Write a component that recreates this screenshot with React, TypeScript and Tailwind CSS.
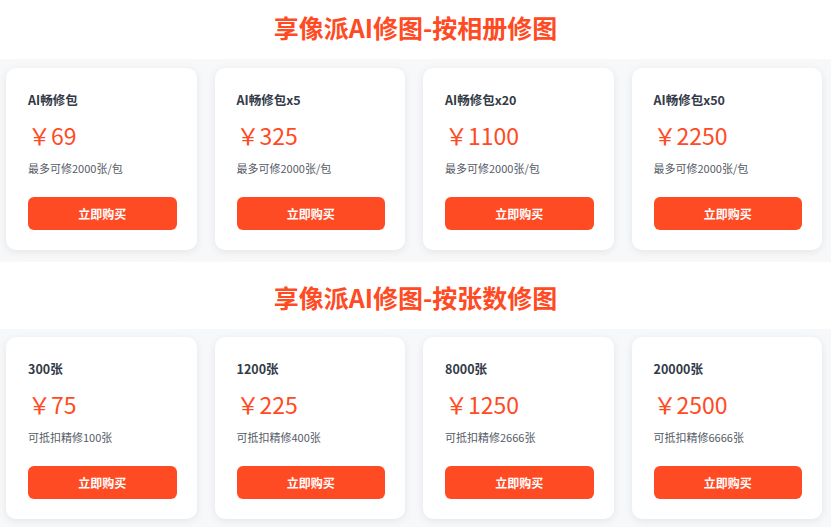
import React from "react";

type Item = { name: string; price: string; desc: string };

const rowA: Item[] = [
  { name: "AI畅修包", price: "69", desc: "最多可修2000张/包" },
  { name: "AI畅修包x5", price: "325", desc: "最多可修2000张/包" },
  { name: "AI畅修包x20", price: "1100", desc: "最多可修2000张/包" },
  { name: "AI畅修包x50", price: "2250", desc: "最多可修2000张/包" },
];

const rowB: Item[] = [
  { name: "300张", price: "75", desc: "可抵扣精修100张" },
  { name: "1200张", price: "225", desc: "可抵扣精修400张" },
  { name: "8000张", price: "1250", desc: "可抵扣精修2666张" },
  { name: "20000张", price: "2500", desc: "可抵扣精修6666张" },
];

function Card({ item }: { item: Item }) {
  return (
    <div className="flex h-[182px] flex-col rounded-[10px] bg-white pl-[22px] pr-[20px] pt-[23px] shadow-[0_2px_8px_rgba(0,0,0,0.08)]">
      <div className="h-[18px] text-[12.5px] leading-[18px] font-semibold text-[#333a48]">{item.name}</div>
      <div className="mt-[10px] h-[32px] text-[23px] leading-[32px] text-[#ff4b24]">
        ￥{item.price}
      </div>
      <div className="mt-[9px] h-[16px] text-[11px] leading-[16px] text-[#555b66]">{item.desc}</div>
      <button className="mt-[21px] h-[33px] w-full rounded-[6px] bg-[#ff4b24] text-[12px] font-bold text-white">
        立即购买
      </button>
    </div>
  );
}

function Row({ items, pt, pb }: { items: Item[]; pt: string; pb: string }) {
  return (
    <div className={`grid grid-cols-4 gap-[18px] bg-[#f7f8fa] pl-[6px] pr-[9px] ${pt} ${pb}`}>
      {items.map((it) => (
        <Card key={it.name} item={it} />
      ))}
    </div>
  );
}

export default function App() {
  return (
    <div
      className="h-[527px] w-[831px] overflow-hidden bg-white"
      style={{ fontFamily: '"Noto Sans CJK SC", "Noto Sans", sans-serif' }}
    >
      <div className="flex h-[59px] items-center justify-center pb-[5px]">
        <h1 className="text-[25px] font-bold leading-[32px] text-[#ff4b24]">享像派AI修图-按相册修图</h1>
      </div>
      <Row items={rowA} pt="pt-[9px]" pb="pb-[12px]" />
      <div className="flex h-[67px] items-center justify-center pt-[3px]">
        <h1 className="text-[25px] font-bold leading-[32px] text-[#ff4b24]">享像派AI修图-按张数修图</h1>
      </div>
      <Row items={rowB} pt="pt-[8px]" pb="pb-[8px]" />
    </div>
  );
}
